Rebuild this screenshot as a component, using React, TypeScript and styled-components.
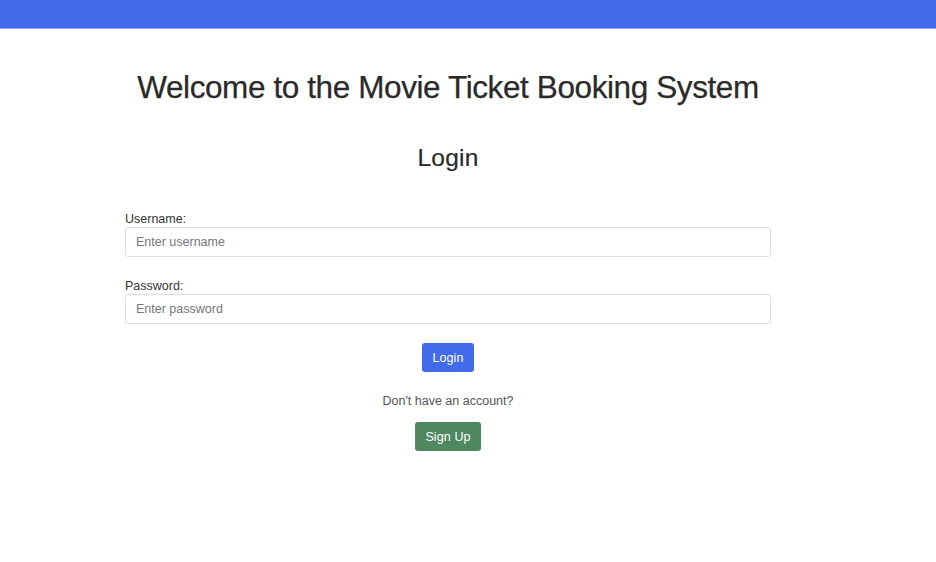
import React from "react";
import styled, { createGlobalStyle } from "styled-components";

const Global = createGlobalStyle`
  html, body { margin: 0; padding: 0; background: #ffffff; }
  body { font-family: "Liberation Sans", Arial, sans-serif; color: #333; }
`;

const TopBar = styled.header`
  height: 28px;
  background: #426bec;
  border-bottom: 1px solid #8aa3f2;
`;

const Main = styled.main`
  width: 646px;
  margin-left: 125px;
  display: flex;
  flex-direction: column;
  align-items: center;
`;

const Title = styled.h1`
  margin: 40px 0 0;
  font-size: 31.5px;
  letter-spacing: -0.4px;
  font-weight: 400;
  color: #2a2a2a;
  line-height: 36px;
  white-space: nowrap;
  -webkit-text-stroke: 0.25px #2a2a2a;
`;

const SubTitle = styled.h2`
  margin: 38px 0 0;
  font-size: 24.5px;
  letter-spacing: 0.2px;
  font-weight: 400;
  color: #2a2a2a;
  line-height: 30px;
  -webkit-text-stroke: 0.2px #2a2a2a;
`;

const Form = styled.form`
  align-self: stretch;
  display: flex;
  flex-direction: column;
  align-items: center;
  margin-top: 38px;
`;

const Field = styled.div`
  align-self: stretch;
  display: flex;
  flex-direction: column;
  margin-bottom: 21px;
  &:last-of-type { margin-bottom: 19px; }
`;

const Label = styled.label`
  font-size: 12.5px;
  color: #333;
  line-height: 16px;
  margin-bottom: 0;
`;

const Input = styled.input`
  height: 30px;
  box-sizing: border-box;
  border: 1px solid #dedede;
  border-radius: 3px;
  padding: 0 10px;
  font-family: inherit;
  font-size: 12.5px;
  color: #333;
  &::placeholder { color: #777; }
`;

const Button = styled.button<{ $bg: string }>`
  height: 29px;
  padding: 0 10px;
  border: none;
  border-radius: 3px;
  background: ${(p) => p.$bg};
  color: #fff;
  font-family: inherit;
  font-size: 12.5px;
  letter-spacing: 0.1px;
`;

const Note = styled.p`
  margin: 21px 0 13px;
  font-size: 12.5px;
  color: #555;
  line-height: 16px;
`;

export default function App() {
  return (
    <>
      <Global />
      <TopBar />
      <Main>
        <Title>Welcome to the Movie Ticket Booking System</Title>
        <SubTitle>Login</SubTitle>
        <Form onSubmit={(e) => e.preventDefault()}>
          <Field>
            <Label>Username:</Label>
            <Input placeholder="Enter username" />
          </Field>
          <Field>
            <Label>Password:</Label>
            <Input type="password" placeholder="Enter password" />
          </Field>
          <Button $bg="#426bec" type="submit">Login</Button>
          <Note>Don't have an account?</Note>
          <Button $bg="#4f8760" type="button">Sign Up</Button>
        </Form>
      </Main>
    </>
  );
}
